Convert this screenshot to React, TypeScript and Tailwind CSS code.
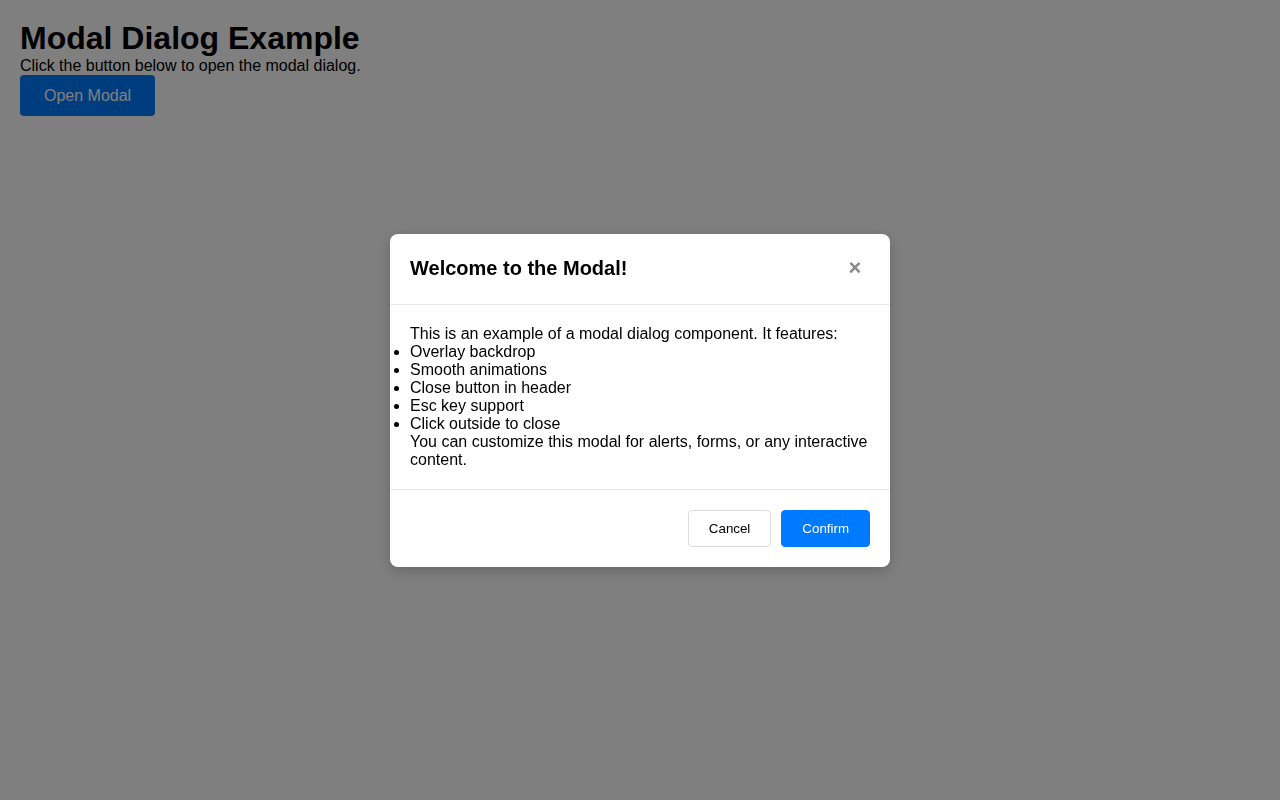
import React, { useState } from 'react';

const features = [
  'Overlay backdrop',
  'Smooth animations',
  'Close button in header',
  'Esc key support',
  'Click outside to close',
];

const App: React.FC = () => {
  const [open, setOpen] = useState(true);

  return (
    <div className="min-h-screen bg-white p-5 text-black font-['Liberation_Sans',Arial,sans-serif]">
      <h1 className="m-0 text-[32px] font-bold leading-[37px]">Modal Dialog Example</h1>
      <p className="m-0 text-base leading-[18px]">Click the button below to open the modal dialog.</p>
      <button
        onClick={() => setOpen(true)}
        className="rounded bg-[#007bff] px-6 py-3 text-base leading-[17px] text-white"
      >
        Open Modal
      </button>

      {open && (
        <div
          className="fixed inset-0 flex items-center justify-center bg-[rgba(0,0,0,0.502)]"
          onClick={() => setOpen(false)}
        >
          <div
            className="w-[500px] rounded-lg bg-white shadow-[0_4px_14px_rgba(0,0,0,0.2)]"
            onClick={(e) => e.stopPropagation()}
          >
            {/* Header */}
            <div className="flex h-[71px] items-center justify-between border-b border-[#e8e8e8] pl-5 pr-5 pb-[2px]">
              <h2 className="m-0 text-xl font-bold leading-6">Welcome to the Modal!</h2>
              <button
                onClick={() => setOpen(false)}
                className="flex h-[30px] w-[30px] items-center justify-center text-[22px] font-bold leading-none text-[#8a8a8a]"
                aria-label="Close"
              >
                ×
              </button>
            </div>

            {/* Body */}
            <div className="p-5 text-base leading-[18px]">
              This is an example of a modal dialog component. It features:
              <ul className="m-0 list-disc p-0">
                {features.map((f) => (
                  <li key={f}>{f}</li>
                ))}
              </ul>
              You can customize this modal for alerts, forms, or any interactive content.
            </div>

            {/* Footer */}
            <div className="flex justify-end gap-[10px] border-t border-[#e8e8e8] p-5">
              <button
                onClick={() => setOpen(false)}
                className="rounded border border-[#dddddd] bg-white px-5 py-[10px] text-[13.33px] leading-[15px] text-black"
              >
                Cancel
              </button>
              <button
                onClick={() => setOpen(false)}
                className="rounded border border-[#007bff] bg-[#007bff] px-5 py-[10px] text-[13.33px] leading-[15px] text-white"
              >
                Confirm
              </button>
            </div>
          </div>
        </div>
      )}
    </div>
  );
};

export default App;
